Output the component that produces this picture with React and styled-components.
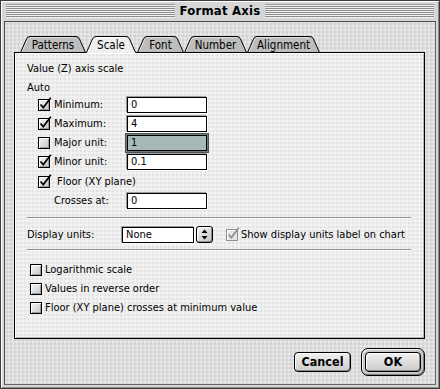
import React from "react";
import styled, { createGlobalStyle } from "styled-components";

const GlobalStyle = createGlobalStyle`
  html, body { margin: 0; padding: 0; background: #d4d4d4; }
  body { width: 440px; height: 389px; overflow: hidden; }
  * { box-sizing: border-box; }
`;

const FONT = `"DejaVu Sans Condensed", "DejaVu Sans", sans-serif`;

const dots = `
  background-image:
    radial-gradient(rgba(0,0,0,0.07) 0.6px, transparent 0.9px),
    radial-gradient(rgba(255,255,255,0.5) 0.6px, transparent 0.9px);
  background-size: 4px 4px, 4px 4px;
  background-position: 0 0, 2px 2px;
`;

const Window = styled.div`
  width: 440px;
  height: 389px;
  border: 1px solid #3c3c3c;
  background: #d6d6d6;
  box-shadow: inset 1px 1px 0 #fff, inset -1px -1px 0 #8a8a8a;
  display: flex;
  flex-direction: column;
  font-family: ${FONT};
  color: #000;
`;

const TitleBar = styled.div`
  height: 20px;
  flex: none;
  display: flex;
  align-items: center;
  padding: 0 5px 1px 5px;
`;

const Stripes = styled.div`
  flex: 1;
  height: 14px;
  background: repeating-linear-gradient(
    to bottom,
    #f2f2f2 0 1px,
    #8c8c8c 1px 2px
  );
  border-top: 1px solid #9a9a9a;
  border-bottom: 1px solid #f2f2f2;
`;

const TitleText = styled.div`
  padding: 0 5px;
  font-weight: bold;
  font-size: 13px;
  line-height: 16px;
  letter-spacing: 0.2px;
`;

const Frame = styled.div`
  flex: 1;
  margin: 0 3px 3px 3px;
  border: 1px solid #4a4a4a;
  border-right-color: #666;
  border-bottom-color: #666;
  background-color: #dddddd;
  ${dots}
  display: flex;
  flex-direction: column;
  padding: 14px 10px 0 9px;
`;

const TabRow = styled.div`
  display: flex;
  height: 16px;
  margin-left: 6px;
  position: relative;
  z-index: 1;
`;

const TabBox = styled.div`
  position: relative;
  width: ${(p) => p.$w}px;
  height: 17px;
  flex: none;
  margin-right: ${(p) => p.$gap || 0}px;
  display: flex;
  align-items: center;
  justify-content: center;
  font-size: 11.5px;
  padding-top: 1px;
`;

const TabShape = styled.svg`
  position: absolute;
  left: 0;
  top: 0;
  overflow: visible;
`;

const TabLabel = styled.span`
  position: relative;
  line-height: 14px;
`;

function Tab({ w, label, selected, gap }) {
  const fill = selected ? "#eeeeee" : "#bdbdbd";
  const outline = `M0.5,16.5 L6.5,3 Q7.5,0.5 10,0.5 L${w - 10},0.5 Q${w - 7.5},0.5 ${w - 6.5},3 L${w - 0.5},16.5`;
  return (
    <TabBox $w={w} $gap={gap}>
      <TabShape width={w} height={17} viewBox={`0 0 ${w} 17`}>
        <path d={`${outline} L${w - 0.5},17 L0.5,17 Z`} fill={fill} />
        <path
          d={`M2,15.5 L7.6,3.4 Q8.4,1.6 10,1.6 L${w - 11},1.6`}
          fill="none"
          stroke={selected ? "#ffffff" : "#e2e2e2"}
          strokeWidth="1"
        />
        <path
          d={selected ? outline : `${outline} Z`}
          fill="none"
          stroke="#000"
          strokeWidth="1"
        />
      </TabShape>
      <TabLabel>{label}</TabLabel>
    </TabBox>
  );
}

const Panel = styled.div`
  height: 287px;
  flex: none;
  border: 1px solid #000;
  background-color: #eeeeee;
  ${dots}
  box-shadow: inset 1px 1px 0 #fff, inset -1px -1px 0 #b4b4b4;
  display: flex;
  flex-direction: column;
  font-size: 11px;
`;

const Heading = styled.div`
  margin-top: ${(p) => p.$top}px;
  padding-left: 12px;
  line-height: 14px;
  height: 14px;
`;

const Row = styled.div`
  display: flex;
  align-items: center;
  height: ${(p) => p.$h || 19}px;
  margin-top: ${(p) => p.$top || 0}px;
  padding-left: ${(p) => p.$indent}px;
  gap: ${(p) => p.$gap ?? 4}px;
`;

const Label = styled.span`
  width: ${(p) => (p.$w ? `${p.$w}px` : "auto")};
  flex: none;
  line-height: 14px;
  margin-left: ${(p) => p.$ml || 0}px;
`;

const Box = styled.span`
  position: relative;
  flex: none;
  width: 12px;
  height: 12px;
  border: 1px solid ${(p) => (p.$disabled ? "#8e8e8e" : "#000")};
  background: ${(p) =>
    p.$disabled ? "#e6e6e6" : "linear-gradient(135deg, #f6f6f6, #c6c6c6)"};
  box-shadow: ${(p) =>
    p.$disabled
      ? "inset 1px 1px 0 #fff"
      : "inset 1px 1px 0 #fff, inset -1px -1px 0 #9c9c9c"};
`;

const CheckMark = styled.svg`
  position: absolute;
  left: 0px;
  top: -3px;
  overflow: visible;
`;

function CheckBox({ checked, disabled }) {
  return (
    <Box $disabled={disabled}>
      {checked && (
        <CheckMark width="13" height="13" viewBox="0 0 13 13">
          <path
            d="M1.5 7.5 L4.3 10.6 L11.8 0.8"
            fill="none"
            stroke={disabled ? "#8e8e8e" : "#000"}
            strokeWidth="1.7"
          />
        </CheckMark>
      )}
    </Box>
  );
}

const Field = styled.div`
  flex: none;
  width: ${(p) => p.$w || 80}px;
  height: 16px;
  border: 1px solid #000;
  background: ${(p) => (p.$focused ? "#a6b8b8" : "#ffffff")};
  box-shadow: ${(p) =>
    p.$focused
      ? "0 0 0 1px #6f7c7c, 0 0 0 2px #4b5656"
      : "-1px -1px 0 #9c9c9c, 1px 1px 0 #ffffff"};
  padding-left: 3px;
  line-height: 14px;
  font-size: 11px;
`;

const Divider = styled.div`
  margin: ${(p) => p.$top}px 13px 0 12px;
  height: 2px;
  border-top: 1px solid #8e8e8e;
  border-bottom: 1px solid #ffffff;
`;

const ArrowButton = styled.div`
  flex: none;
  width: 17px;
  height: 17px;
  margin: 0 13px 0 2px;
  border: 1px solid #000;
  border-radius: 3px;
  background: linear-gradient(135deg, #f2f2f2, #c4c4c4);
  box-shadow: inset 1px 1px 0 #fff, inset -1px -1px 0 #8e8e8e;
  display: flex;
  align-items: center;
  justify-content: center;
`;

const Footer = styled.div`
  display: flex;
  justify-content: flex-end;
  align-items: center;
  gap: 10px;
  margin-top: 9px;
`;

const Button = styled.div`
  width: ${(p) => p.$w}px;
  height: 20px;
  border: 1px solid #000;
  border-radius: 4px;
  background: linear-gradient(#f0f0f0, #cccccc);
  box-shadow: inset 1px 1px 0 #fff, inset -1px -1px 0 #8c8c8c;
  display: flex;
  align-items: center;
  justify-content: center;
  font-weight: bold;
  font-size: 12.5px;
  line-height: 14px;
`;

const DefaultRing = styled.div`
  border: 1px solid #000;
  border-radius: 7px;
  padding: 3px;
  background: #c8c8c8;
  box-shadow: inset 1px 1px 0 #f4f4f4, inset -1px -1px 0 #7c7c7c;
`;

const tabs = [
  { label: "Patterns", w: 66, gap: 0 },
  { label: "Scale", w: 50, gap: 1, selected: true },
  { label: "Font", w: 47, gap: 0 },
  { label: "Number", w: 63, gap: 0 },
  { label: "Alignment", w: 73, gap: 0 },
];

const autoRows = [
  { label: "Minimum:", value: "0", checked: true },
  { label: "Maximum:", value: "4", checked: true },
  { label: "Major unit:", value: "1", checked: false, focused: true },
  { label: "Minor unit:", value: "0.1", checked: true },
];

const options = [
  "Logarithmic scale",
  "Values in reverse order",
  "Floor (XY plane) crosses at minimum value",
];

export default function App() {
  return (
    <>
      <GlobalStyle />
      <Window>
        <TitleBar>
          <Stripes />
          <TitleText>Format Axis</TitleText>
          <Stripes />
        </TitleBar>
        <Frame>
          <TabRow>
            {tabs.map((t) => (
              <Tab key={t.label} {...t} />
            ))}
          </TabRow>
          <Panel>
            <Heading $top={9}>Value (Z) axis scale</Heading>
            <Heading $top={5}>Auto</Heading>
            {autoRows.map((r) => (
              <Row key={r.label} $indent={23}>
                <CheckBox checked={r.checked} />
                <Label $w={69}>{r.label}</Label>
                <Field $focused={r.focused}>{r.value}</Field>
              </Row>
            ))}
            <Row $indent={23} $top={2} $h={18} $gap={7}>
              <CheckBox checked />
              <Label>Floor (XY plane)</Label>
            </Row>
            <Row $indent={39} $gap={0}>
              <Label $w={73}>Crosses at:</Label>
              <Field>0</Field>
            </Row>
            <Divider $top={7} />
            <Row $indent={12} $top={6} $gap={0}>
              <Label $w={95}>Display units:</Label>
              <Field $w={72}>None</Field>
              <ArrowButton>
                <svg width="7" height="11" viewBox="0 0 7 11">
                  <path d="M3.5 0.5 L6.5 4 L0.5 4 Z" fill="#000" />
                  <path d="M0.5 7 L6.5 7 L3.5 10.5 Z" fill="#000" />
                </svg>
              </ArrowButton>
              <CheckBox checked disabled />
              <Label $ml={3}>Show display units label on chart</Label>
            </Row>
            <Divider $top={5} />
            {options.map((o, i) => (
              <Row key={o} $indent={15} $gap={3} $top={i === 0 ? 9 : 0}>
                <CheckBox />
                <Label>{o}</Label>
              </Row>
            ))}
          </Panel>
          <Footer>
            <Button $w={57}>Cancel</Button>
            <DefaultRing>
              <Button $w={56}>OK</Button>
            </DefaultRing>
          </Footer>
        </Frame>
      </Window>
    </>
  );
}
